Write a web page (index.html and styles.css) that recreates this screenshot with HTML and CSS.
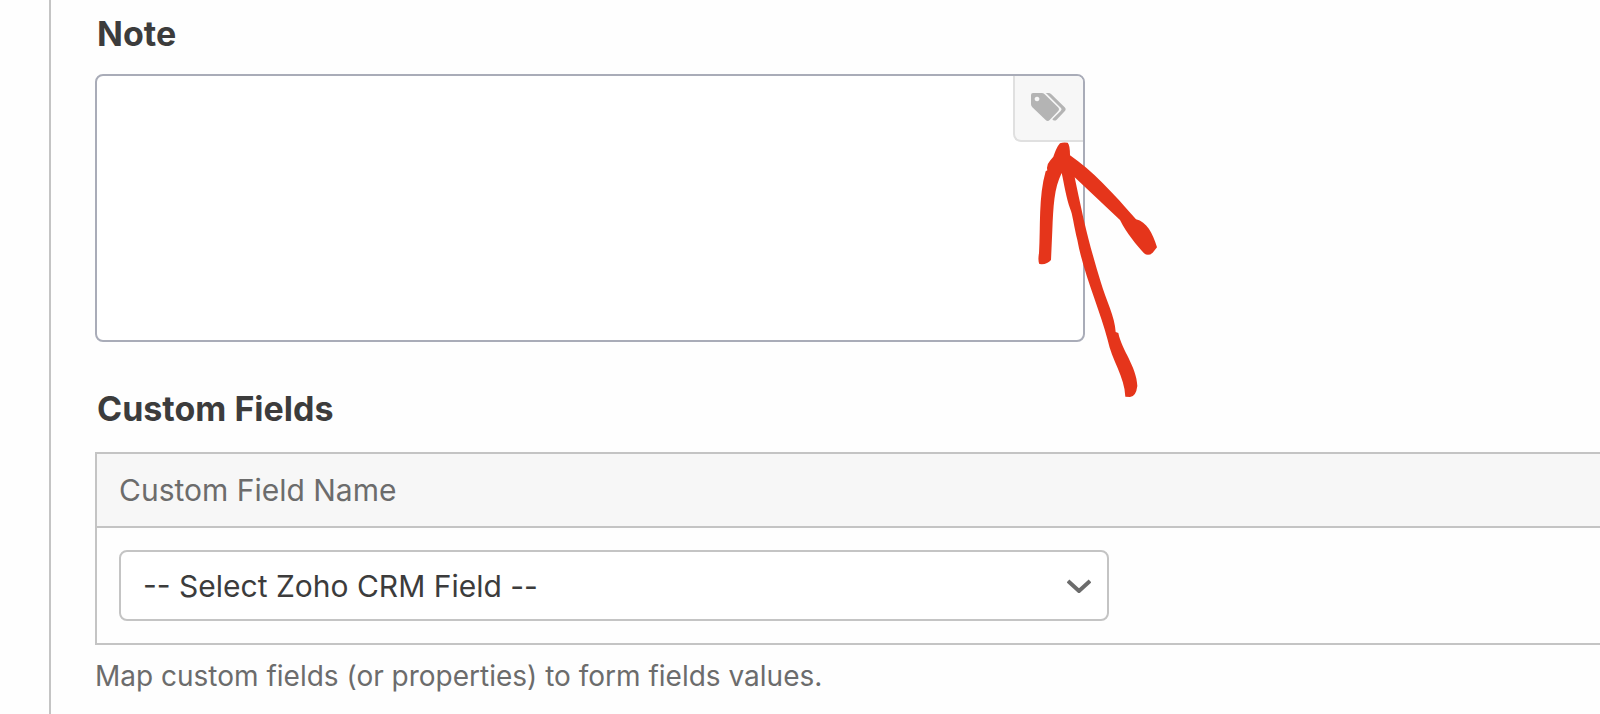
FILE: index.html
```html
<!DOCTYPE html>
<html lang="en">
<head>
  <meta charset="utf-8" />
  <meta name="viewport" content="width=device-width, initial-scale=1.0"/>
  <title>Zoho CRM Feed Settings</title>
  <link rel="stylesheet" href="styles.css">
</head>
<body>

  <main class="panel">

    <!-- Note -->
    <div class="field">
      <label class="field-label" for="note">Note</label>
      <div class="note-box">
        <textarea id="note" class="note-input"></textarea>
        <button type="button" class="merge-tag-btn" title="Insert Merge Tags" aria-label="Insert Merge Tags">
          <svg viewBox="0 0 105 84" aria-hidden="true">
            <path fill-rule="evenodd" d="M6 0H32Q37 0 41 4L81 43Q87 49 81 55L56 81Q50 87 44 81L4 43Q0 39 0 34V6Q0 0 6 0ZM18 11a7 7 0 1 0 .1 0Z"/>
            <path d="M44 0H52Q57 0 61 4L101 43Q107 49 101 55L77 80Q72 85 66 81L64 79L89 54Q94 49 89 44L50 5Q47 2 44 0Z"/>
          </svg>
        </button>
        <svg class="arrow" viewBox="0 0 600 840" aria-hidden="true">
          <path d="M180 40Q188 36 203 38Q210 45 210 76C275 120 340 190 408 268C440 275 458 310 471 352L458 368Q445 380 432 370C410 345 380 310 360 270L224 142C235 195 245 240 252 272C268 340 285 400 302 455C318 510 345 560 347 606L355 609C365 660 410 710 412 768Q408 800 390 801L376 800C374 740 335 690 323 630C300 540 250 430 232 330C222 290 217 250 211 238C199 205 192 160 185 129C162 175 160 230 157 300L153 390Q141 405 118 402Q113 390 117 370C122 290 115 200 137 124L142 121Q138 105 150 92L160 80C166 65 172 48 180 40Z"/>
        </svg>
      </div>
    </div>

    <!-- Custom Fields -->
    <div class="field">
      <h2 class="field-label" id="customFieldsLabel">Custom Fields</h2>
      <table class="map-table" aria-labelledby="customFieldsLabel">
        <thead>
          <tr><th scope="col">Custom Field Name</th></tr>
        </thead>
        <tbody>
          <tr>
            <td>
              <div class="select-wrap">
                <select class="field-select" aria-label="Custom Field Name">
                  <option>-- Select Zoho CRM Field --</option>
                </select>
                <svg class="chevron" viewBox="0 0 24 14" aria-hidden="true">
                  <path d="M1 2L12 12L23 2"/>
                </svg>
              </div>
            </td>
          </tr>
        </tbody>
      </table>
      <p class="description">Map custom fields (or properties) to form fields values.</p>
    </div>

  </main>

</body>
</html>
```
FILE: styles.css
```css
:root {
  --text:         #3c3c3c;
  --muted:        #6c6c6c;
  --border:       #c4c4c4;
  --input-border: #a9acb8;
  --shade:        #f7f7f7;
  --arrow:        #e5351b;
}
*, *::before, *::after { box-sizing: border-box; margin: 0; padding: 0; }
body {
  font-family: Inter, "Liberation Sans", sans-serif;
  background: #fefefe;
  color: var(--text);
  overflow-x: hidden;
}

.panel {
  display: flex; flex-direction: column; gap: 47px;
  min-height: 100vh;
  margin-left: 49px;
  padding: 14px 0 20px 44px;
  border-left: 2px solid var(--border);
}

.field-label {
  display: block;
  margin-bottom: 20px;
  padding-left: 2px;
  font-size: 34px; line-height: 40px; font-weight: 700;
}

/* Note */
.note-box { position: relative; max-width: 990px; }
.note-input {
  display: block;
  width: 100%; height: 268px;
  padding: 16px 80px 16px 20px;
  border: 2px solid var(--input-border); border-radius: 8px;
  background: #fff; color: var(--text);
  font: inherit; font-size: 30px;
  resize: none;
}
.merge-tag-btn {
  position: absolute; top: 2px; right: 2px;
  display: flex; align-items: center; justify-content: center;
  width: 70px; height: 66px;
  padding: 0 2px 2px 0;
  border: solid #e0e0e0; border-width: 0 0 2px 2px;
  border-radius: 0 6px 0 8px;
  background: var(--shade);
  cursor: pointer;
}
.merge-tag-btn svg { width: 35px; height: 28px; fill: #b4b4b4; }
.arrow {
  position: absolute; top: 56px; right: -115px;
  width: 200px; height: 280px;
  fill: var(--arrow);
  pointer-events: none;
}

/* Custom fields table */
.map-table {
  width: 100%;
  margin-top: 23px;
  border: solid var(--border); border-width: 2px 0 2px 2px;
  border-spacing: 0;
}
.map-table th {
  height: 74px;
  padding: 0 22px;
  border-bottom: 2px solid var(--border);
  background: var(--shade);
  color: var(--muted);
  font-size: 30px; font-weight: 400; text-align: left;
}
.map-table td { padding: 22px; }

.select-wrap { position: relative; max-width: 990px; }
.field-select {
  display: block;
  width: 100%; height: 71px;
  padding: 0 60px 0 22px;
  border: 2px solid var(--border); border-radius: 8px;
  background: #fff; color: var(--text);
  font: inherit; font-size: 30px;
  appearance: none;
}
.chevron {
  position: absolute; top: 29px; right: 18px;
  width: 24px; height: 14px;
  fill: none; stroke: var(--muted); stroke-width: 4;
  pointer-events: none;
}

.description {
  margin-top: 13px;
  color: var(--muted);
  font-size: 28px; line-height: 36px;
}
```
